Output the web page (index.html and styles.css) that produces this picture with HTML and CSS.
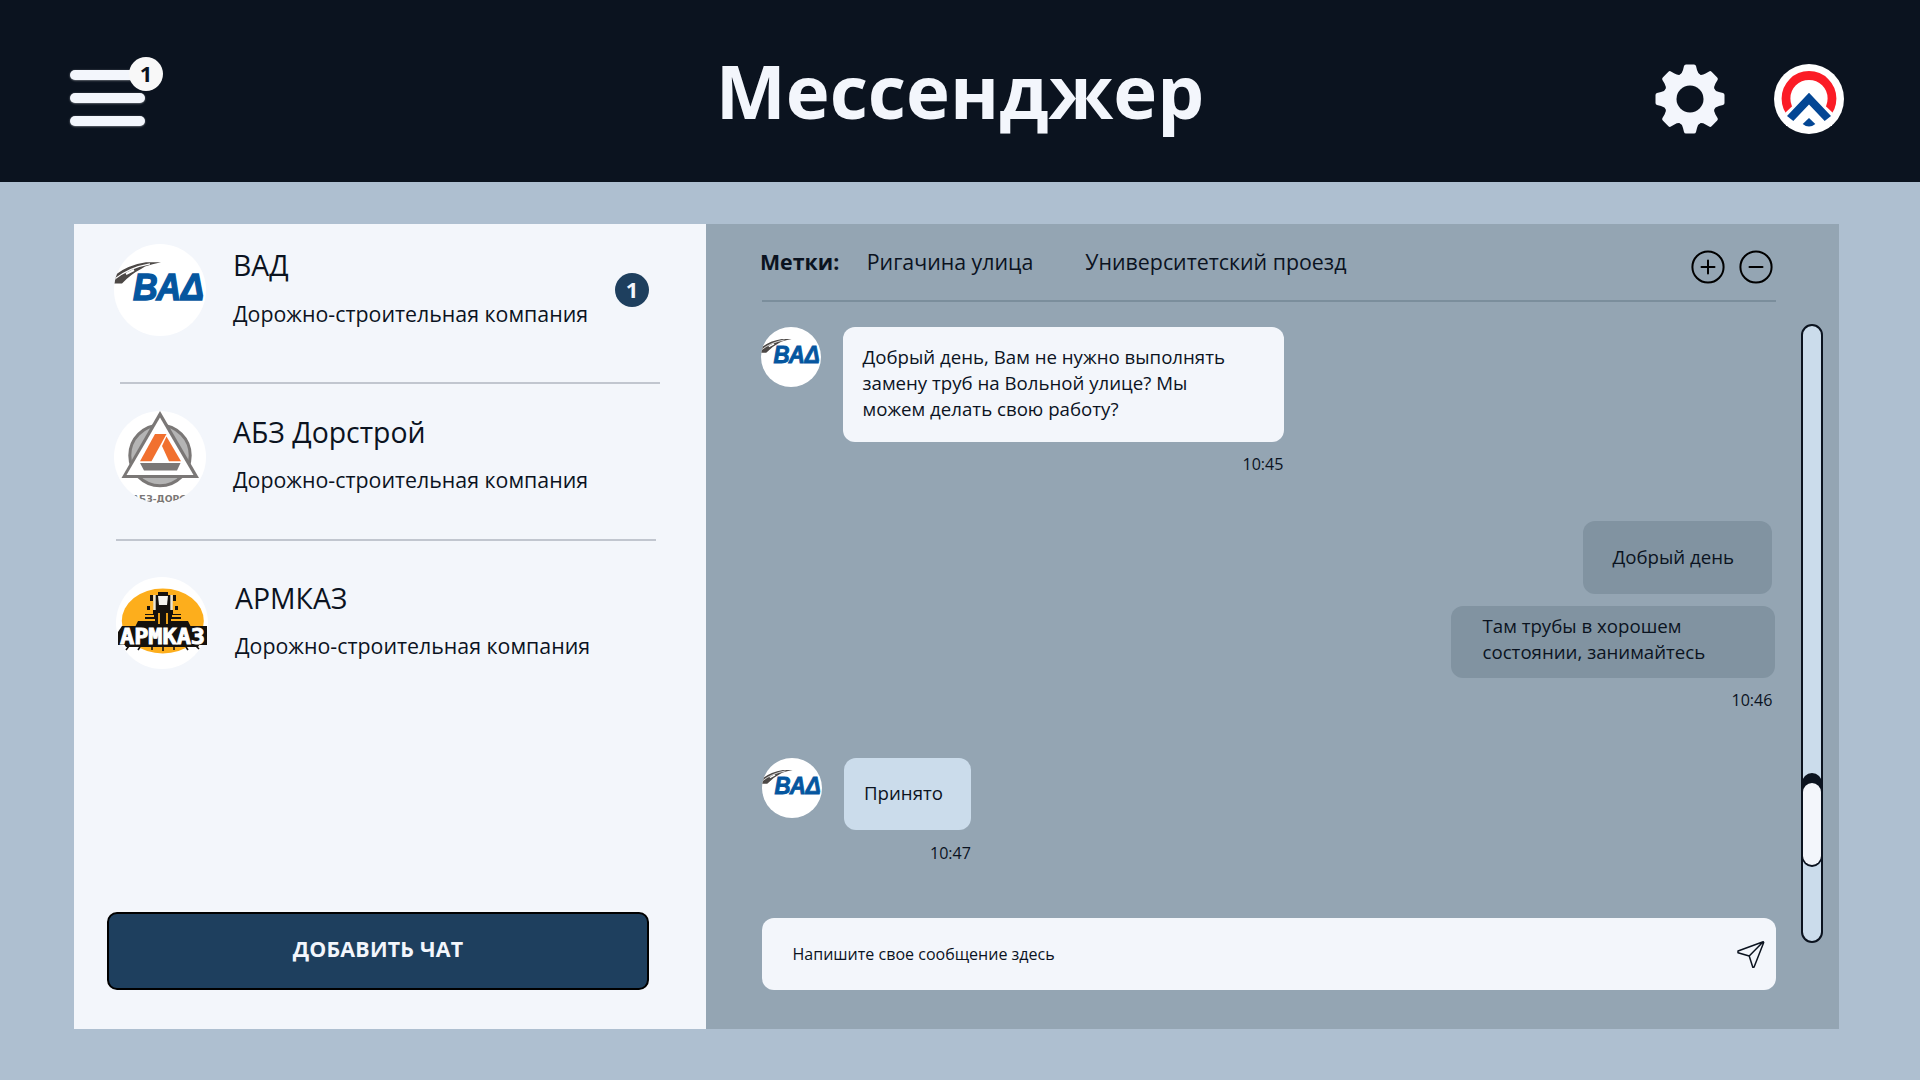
FILE: index.html
```html
<!DOCTYPE html>
<html lang="ru">
<head>
<meta charset="utf-8">
<title>Мессенджер</title>
<link rel="stylesheet" href="styles.css">
</head>
<body>
<svg class="defs" width="0" height="0" aria-hidden="true">
  <defs>
    <clipPath id="round"><circle cx="46" cy="46" r="46"/></clipPath>
    <g id="vad">
      <circle cx="46" cy="46" r="46" fill="#fff"/>
      <g clip-path="url(#round)">
        <path d="M1 31Q14 21 32 18.300L47 18.300Q38 20 31 22.500L27 25Q17 30 8 39.500L0 39.500Z" fill="#4c4846"/>
        <path d="M0 35.500Q15 23.500 36 19.800" stroke="#fff" stroke-width="1.200" fill="none"/>
        <path d="M12 30L20 26" stroke="#fff" stroke-width="2" fill="none"/>
        <text class="vad-text" x="19" y="55.500" textLength="71" lengthAdjust="spacingAndGlyphs">ВАΔ</text>
      </g>
    </g>
  </defs>
</svg>

<header class="header">
  <button class="menu" aria-label="Меню">
    <span class="bar"></span><span class="bar"></span><span class="bar"></span>
    <span class="menu-badge">1</span>
  </button>
  <h1 class="title">Мессенджер</h1>
  <div class="header-icons">
    <svg class="gear" viewBox="0 0 70 70">
      <defs><path id="tooth" d="M24 11.500Q27 10 28 6L29 2Q29.400 0.500 31 0.500L39 0.500Q40.600 0.500 41 2L42 6Q43 10 46 11.500L45 20L25 20Z"/></defs>
      <g fill="#f3f6fc">
        <circle cx="35" cy="35" r="26"/>
        <use href="#tooth"/><use href="#tooth" transform="rotate(45 35 35)"/><use href="#tooth" transform="rotate(90 35 35)"/><use href="#tooth" transform="rotate(135 35 35)"/><use href="#tooth" transform="rotate(180 35 35)"/><use href="#tooth" transform="rotate(225 35 35)"/><use href="#tooth" transform="rotate(270 35 35)"/><use href="#tooth" transform="rotate(315 35 35)"/>
      </g>
      <circle cx="35" cy="35" r="13.500" fill="#0b131f"/>
    </svg>
    <svg class="profile" viewBox="0 0 70 70">
      <circle cx="35" cy="35" r="35" fill="#fff"/>
      <circle cx="35" cy="34.500" r="23" fill="none" stroke="#fb1c26" stroke-width="8.800"/>
      <path d="M35 26.500L11 49L12 62H58L59 49Z" fill="#fff"/>
      <path d="M35 28.800L57 52L50.700 57L35 40.500L19.300 57L13 52Z" fill="#034694"/>
      <path d="M35 54L41.300 60Q35 65 28.700 60Z" fill="#034694"/>
    </svg>
  </div>
</header>

<main class="panel">
  <aside class="chats">
    <div class="chat">
      <svg class="avatar" viewBox="0 0 92 92"><use href="#vad"/></svg>
      <div class="chat-text"><div class="name">ВАД</div><div class="sub">Дорожно-строительная компания</div></div>
      <span class="count">1</span>
    </div>
    <div class="rule rule-first"></div>
    <div class="chat chat-second">
      <svg class="avatar" viewBox="0 0 92 92">
        <circle cx="46" cy="46" r="46" fill="#fff"/>
        <circle cx="46" cy="44.500" r="30.200" fill="#b4b4b4" stroke="#7a7776" stroke-width="3"/>
        <path d="M46 0L85 67H7.500Z" fill="#7a7776"/>
        <path d="M46 6.500L79.500 64H12.500Z" fill="#fff"/>
        <path d="M41 23H52.500L37.500 50.300H26Z" fill="#f1702f"/>
        <path d="M52.500 25.500L67 50.300H55L48 35Z" fill="#f1702f"/>
        <path d="M26 52H66.500L63 59.500H30Z" fill="#7a7776"/>
        <g clip-path="url(#round)"><text class="abz-text" x="18" y="90.500" textLength="54" lengthAdjust="spacingAndGlyphs">АБЗ-ДОРС</text></g>
      </svg>
      <div class="chat-text"><div class="name">АБЗ Дорстрой</div><div class="sub">Дорожно-строительная компания</div></div>
    </div>
    <div class="rule rule-second"></div>
    <div class="chat chat-third">
      <svg class="avatar" viewBox="0 0 92 92">
        <circle cx="46" cy="46" r="46" fill="#fff"/>
        <ellipse cx="46.800" cy="44" rx="41" ry="32.500" fill="#fdae1c"/>
        <g fill="#15110d">
          <path d="M38 18H42V15H52V18H56V38H38Z"/>
          <path d="M29 37H37V33H57V37H65V44H72L75 50H19L22 44H29Z"/>
          <path d="M34 18H37V24H34ZM57 18H60V24H57ZM31 29H34V33H31ZM59 29H62V33H59Z"/>
          <path d="M2 55L6 49H87L91 49V68H2Z"/>
          <path d="M8 67H84L82 70H10Z"/>
        </g>
        <path d="M42 19H52L51 28H43Z" fill="#f4f3ee"/>
        <path d="M38.500 18V33M55.500 18V33" stroke="#e9e4d5" stroke-width="2.400"/>
        <path d="M43 36V47M51 36V47M28 39H38M56 39H66M25 43H39M55 43H69" stroke="#fdae1c" stroke-width="1.800"/>
        <path d="M13 69L10 73M24 70L22 73M36 70V73M47 70V74M58 70V73M70 70L72 73M80 69L83 72" stroke="#15110d" stroke-width="1.600"/>
        <text class="arm-text" x="4" y="66.500" textLength="85" lengthAdjust="spacingAndGlyphs">АРМКАЗ</text>
      </svg>
      <div class="chat-text"><div class="name">АРМКАЗ</div><div class="sub">Дорожно-строительная компания</div></div>
    </div>
    <button class="add">ДОБАВИТЬ ЧАТ</button>
  </aside>

  <section class="dialog">
    <div class="feed">
      <div class="tags">
        <b class="tags-label">Метки:</b>
        <span class="tag">Ригачина улица</span>
        <span class="tag tag-next">Университетский проезд</span>
        <svg class="tag-btn" viewBox="0 0 34 34"><circle cx="17" cy="17" r="15.600"/><path d="M10.500 17H23.500M17 10.500V23.500"/></svg>
        <svg class="tag-btn" viewBox="0 0 34 34"><circle cx="17" cy="17" r="15.600"/><path d="M10.500 17H23.500"/></svg>
      </div>
      <div class="msg msg-first">
        <svg class="avatar-s" viewBox="0 0 92 92"><use href="#vad"/></svg>
        <div class="msg-body">
          <div class="bubble bubble-long">Добрый день, Вам не нужно выполнять<br>замену труб на Вольной улице? Мы<br>можем делать свою работу?</div>
          <time class="time">10:45</time>
        </div>
      </div>
      <div class="msg-own">
        <div class="bubble own own-short">Добрый день</div>
        <div class="bubble own own-long">Там трубы в хорошем<br>состоянии, занимайтесь</div>
        <time class="time">10:46</time>
      </div>
      <div class="msg msg-last">
        <svg class="avatar-s" viewBox="0 0 92 92"><use href="#vad"/></svg>
        <div class="msg-body">
          <div class="bubble bubble-short">Принято</div>
          <time class="time">10:47</time>
        </div>
      </div>
      <div class="composer">
        <span>Напишите свое сообщение здесь</span>
        <svg class="send" viewBox="0 0 28 29"><path d="M26.200 1.700L1 11V12.700L12.200 16L15.800 27.300H17L26.700 2.600ZM12.200 16L26.200 1.700"/></svg>
      </div>
    </div>
    <div class="scroll"><div class="thumb"><div class="thumb-face"></div></div></div>
  </section>
</main>
</body>
</html>
```
FILE: styles.css
```css
* { box-sizing: border-box; }

body {
  margin: 0;
  width: 1920px;
  height: 1080px;
  overflow: hidden;
  background: #aebfd0;
  color: #0b131f;
  font-family: "Open Sans", "Noto Sans", sans-serif;
}

button { font-family: inherit; padding: 0; }
.defs { position: absolute; }

.header {
  display: grid;
  grid-template-columns: 1fr auto 1fr;
  align-items: start;
  height: 182px;
  padding: 0 76px 0 76px;
  background: #0b131f;
  color: #f3f6fc;
}

.menu {
  position: relative;
  display: flex;
  flex-direction: column;
  gap: 13px;
  width: 75px;
  margin: 70px 0 0 -6.5px;
  border: 0;
  background: none;
}

.bar {
  height: 10px;
  border-radius: 5px;
  background: #f3f6fc;
  box-shadow: 0 0.5px 2px rgba(255, 255, 255, 0.5);
}

.menu-badge {
  position: absolute;
  left: 59.5px;
  top: -13px;
  width: 34px;
  height: 34px;
  border-radius: 50%;
  background: #f8f8f8;
  color: #0b131f;
  font-size: 22px;
  font-weight: 700;
  line-height: 33px;
  text-align: center;
}

.title {
  margin: 41px 0 0;
  font-size: 74.3px;
  font-weight: 700;
  line-height: 100px;
}

.header-icons {
  display: flex;
  justify-content: flex-end;
  gap: 49px;
  margin-top: 64px;
}

.gear, .profile { width: 70px; height: 70px; }

.panel {
  display: grid;
  grid-template-columns: 632px 1133px;
  height: 805px;
  margin: 42px 0 0 74px;
}

.chats {
  display: flex;
  flex-direction: column;
  padding: 20px 46px 39px 33px;
  background: #f3f6fb;
}

.chat {
  display: flex;
  width: 542px;
  height: 92px;
  padding-left: 7px;
  flex-shrink: 0;
}

.avatar { width: 92px; height: 92px; }
.chat-text { margin-left: 27px; }
.name { margin-top: 1px; font-size: 28.4px; line-height: 40px; white-space: nowrap; }
.sub { margin-top: 14px; font-size: 21.35px; line-height: 30px; white-space: nowrap; }
.chat-second .sub, .chat-third .sub { margin-top: 13px; }
.count {
  width: 34px;
  height: 34px;
  margin: 29px 0 0 auto;
  border-radius: 50%;
  background: #1e3f5e;
  color: #f3f6fc;
  font-size: 22px;
  font-weight: 700;
  line-height: 33px;
  text-align: center;
}

.rule { width: 540px; height: 2px; background: #c1c6cf; flex-shrink: 0; }
.rule-first { margin: 46px 0 0 13px; }
.rule-second { margin: 36px 0 0 9px; }
.chat-second { margin-top: 27px; }
.chat-third { margin-top: 36px; padding-left: 9px; }

.add {
  width: 542px;
  height: 78px;
  margin-top: auto;
  padding-bottom: 5px;
  border: 2px solid #000;
  border-radius: 10px;
  background: #1e3f5e;
  color: #f3f6fc;
  font-size: 21.4px;
  font-weight: 700;
  letter-spacing: 0.2px;
}

.vad-text { fill: #05569f; stroke: #05569f; stroke-width: 1.4px; font: italic bold 37px "Liberation Sans", sans-serif; }
.abz-text { fill: #7a7776; font: bold 8.5px "DejaVu Sans", sans-serif; }
.arm-text { fill: #fff; font: bold 22px "DejaVu Sans Mono", monospace; stroke: #fff; stroke-width: 0.9px; }

.dialog {
  display: flex;
  padding: 0 16px 39px 56px;
  background: #94a5b3;
}

.feed { display: flex; flex-direction: column; width: 1014px; }

.tags {
  display: flex;
  align-items: flex-start;
  height: 78px;
  padding: 23px 3.5px 0 0;
  border-bottom: 2px solid #7b8e9c;
  font-size: 21.35px;
  line-height: 30px;
}
.tags-label { margin-left: -2px; }
.tag { margin-left: 27.5px; }
.tag-next { margin-left: 52px; }
.tag-btn {
  width: 34px;
  height: 34px;
  margin: 3px 0 0 14px;
  fill: none;
  stroke: #000;
  stroke-width: 2;
  stroke-linecap: round;
}
.tag-next + .tag-btn { margin-left: auto; }

.msg { display: flex; gap: 22px; }
.msg-first { margin: 25px 0 0 -1.5px; }
.avatar-s { width: 60px; height: 60px; }
.msg-body { display: flex; flex-direction: column; }
.bubble {
  border-radius: 12px;
  font-size: 18.66px;
  line-height: 26px;
  white-space: nowrap;
}
.bubble-long { width: 441px; height: 115px; padding: 17px 20px; background: #f3f6fb; }
.bubble-short { width: 127px; height: 72px; padding: 22px 20px; background: #cbdceb; }
.time { align-self: flex-end; margin-top: 9.5px; font-size: 16.1px; line-height: 24px; }

.msg-own { display: flex; flex-direction: column; align-items: flex-end; margin-top: 45.5px; }
.own { background: #8193a1; }
.own-short { width: 189px; height: 72.5px; margin-right: 4px; padding: 22.5px 29.5px; }
.own-long { width: 324px; height: 72px; margin: 12.5px 1px 0 0; padding: 6.5px 31.5px; }
.msg-own .time { margin-right: 3.5px; }

.msg-last { margin-top: 46.5px; }
.msg-last .time { margin-top: 10.5px; }
.composer {
  display: flex;
  align-items: center;
  justify-content: space-between;
  height: 72px;
  margin-top: auto;
  padding: 0 11.5px 0 30.5px;
  border-radius: 12px;
  background: #f3f6fb;
  font-size: 16.05px;
}
.send { width: 28px; height: 29px; fill: none; stroke: #0b131f; stroke-width: 1.5; stroke-linejoin: round; }

.scroll {
  width: 22px;
  height: 619px;
  margin: 100px 0 0 25px;
  padding-top: 447px;
  border: 2px solid #0b131f;
  border-radius: 11px;
  background: #cbdceb;
}
.thumb {
  height: 94px;
  margin: 0 -1px;
  padding: 10px 1px 2px;
  border-radius: 10px;
  background: #0b131f;
}
.thumb-face { height: 82px; border-radius: 9px; background: #f3f6fb; }
```
